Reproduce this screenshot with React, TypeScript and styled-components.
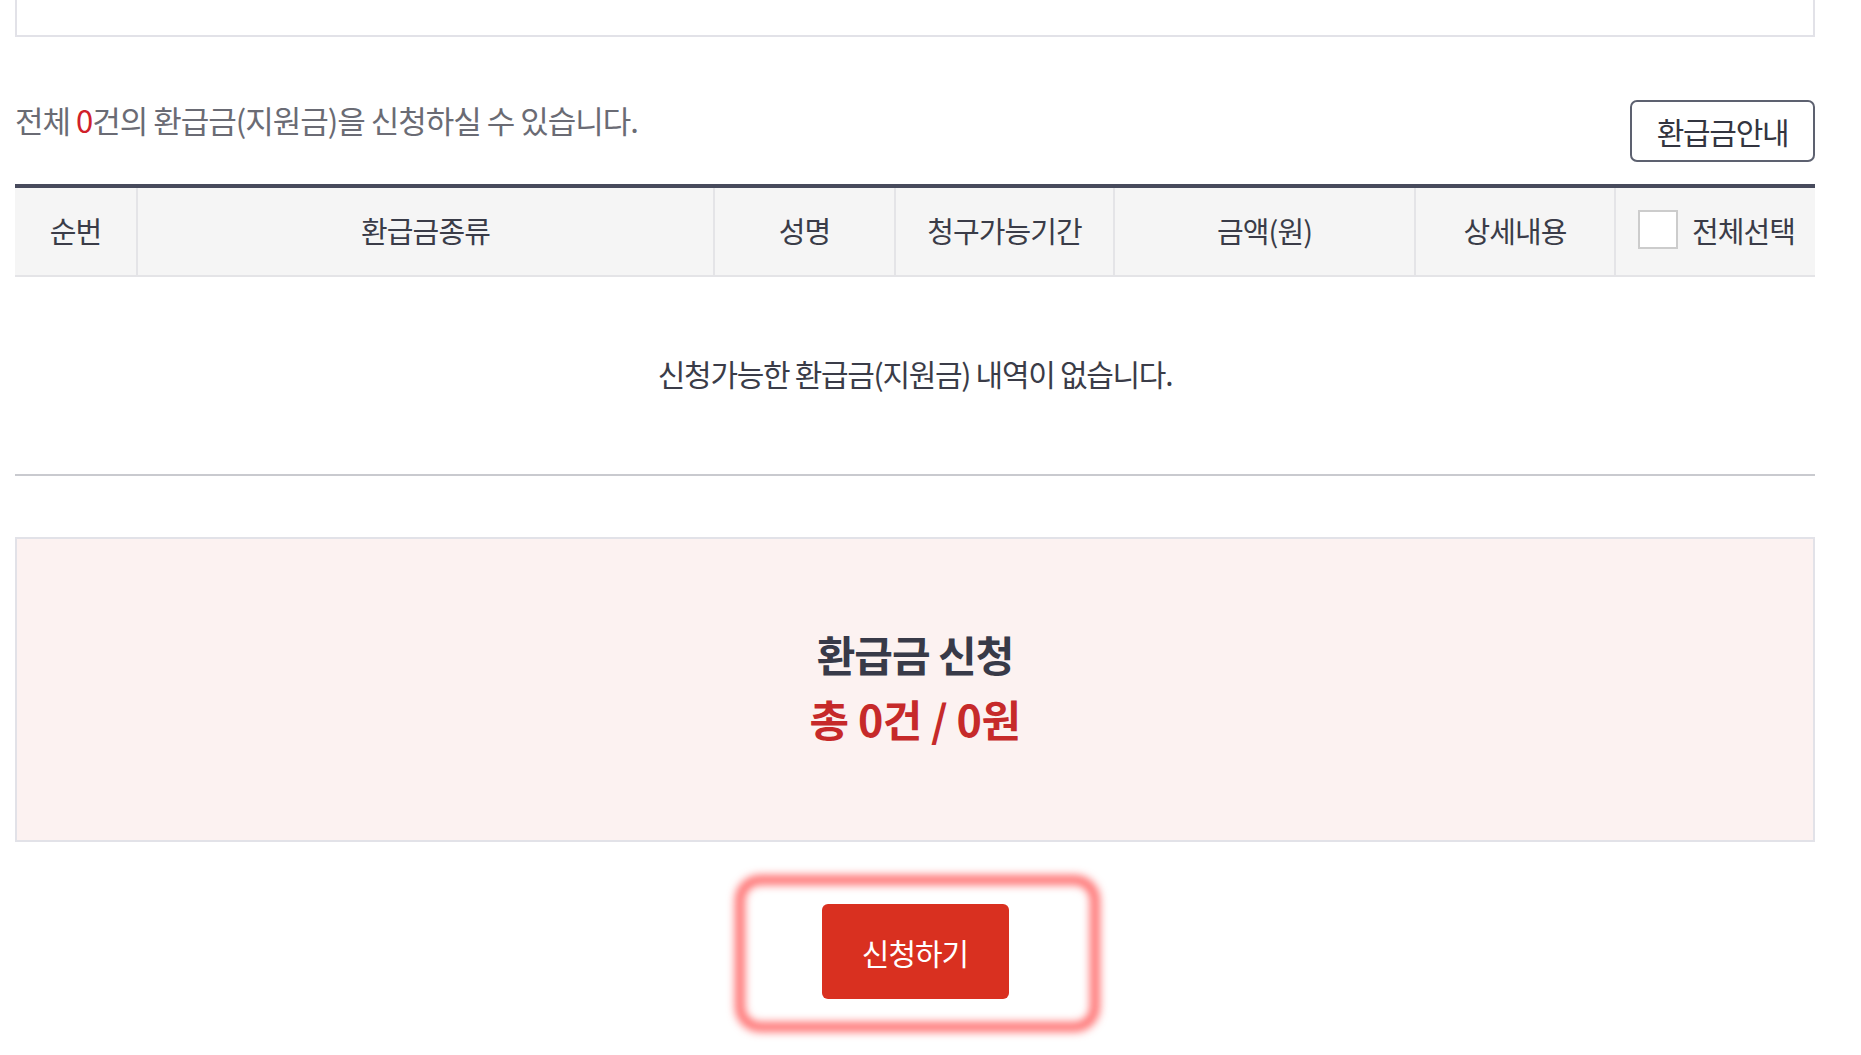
import React from "react";
import styled, { createGlobalStyle } from "styled-components";

const columns = [
  { key: "no", label: "순번" },
  { key: "kind", label: "환급금종류" },
  { key: "name", label: "성명" },
  { key: "period", label: "청구가능기간" },
  { key: "amount", label: "금액(원)" },
  { key: "detail", label: "상세내용" },
];

export default function App() {
  const count = 0;
  const total = 0;

  return (
    <>
      <GlobalStyle />
      <Page>
        <TopBox />

        <IntroRow>
          <IntroText>
            전체 <Red>{count}</Red>건의 환급금(지원금)을 신청하실 수 있습니다.
          </IntroText>
          <GuideButton type="button">환급금안내</GuideButton>
        </IntroRow>

        <Table>
          <HeadRow>
            {columns.map((col) => (
              <HeadCell key={col.key}>{col.label}</HeadCell>
            ))}
            <HeadCell $check>
              <CheckBox />
              전체선택
            </HeadCell>
          </HeadRow>
          <EmptyRow>신청가능한 환급금(지원금) 내역이 없습니다.</EmptyRow>
        </Table>

        <SummaryBox>
          <SummaryTitle>환급금 신청</SummaryTitle>
          <SummaryTotal>
            총 {count}건 / {total}원
          </SummaryTotal>
        </SummaryBox>

        <SubmitArea>
          <SubmitWrap>
            <Glow />
            <SubmitButton type="button">신청하기</SubmitButton>
          </SubmitWrap>
        </SubmitArea>
      </Page>
    </>
  );
}

const GlobalStyle = createGlobalStyle`
  html, body {
    margin: 0;
    padding: 0;
    background: #fff;
  }
  body {
    font-family: "Noto Sans CJK KR", "Noto Sans", sans-serif;
    color: #3a3c48;
  }
`;

const Page = styled.div`
  width: 1800px;
  padding-left: 15px;
  height: 1055px;
  overflow: hidden;
`;

const TopBox = styled.div`
  height: 35px;
  border: 2px solid #e2e2e8;
  border-top: none;
`;

const IntroRow = styled.div`
  display: flex;
  justify-content: space-between;
  align-items: flex-start;
  margin-top: 63px;
`;

const IntroText = styled.p`
  margin: 0;
  font-size: 31px;
  line-height: 40px;
  letter-spacing: -1px;
  color: #6a6b74;
`;

const Red = styled.span`
  color: #d0202a;
`;

const GuideButton = styled.button`
  width: 185px;
  height: 62px;
  border: 2px solid #5d6170;
  border-radius: 7px;
  background: #fff;
  color: #333540;
  font-family: inherit;
  font-size: 30px;
  letter-spacing: -1.3px;
  cursor: pointer;
`;

const Table = styled.div`
  margin-top: 22px;
  border-top: 4px solid #474a5c;
  border-bottom: 2px solid #c9cacf;
`;

const HeadRow = styled.div`
  display: grid;
  grid-template-columns: 121px 577px 181px 219px 301px 200px 1fr;
  height: 87px;
  background: #f5f5f5;
  border-bottom: 2px solid #e4e4e7;
`;

const HeadCell = styled.div<{ $check?: boolean }>`
  display: flex;
  align-items: center;
  justify-content: ${(p) => (p.$check ? "flex-start" : "center")};
  padding-left: ${(p) => (p.$check ? "22px" : "0")};
  padding-bottom: 4px;
  gap: 14px;
  font-size: 29px;
  letter-spacing: -0.9px;
  color: #3a3c48;
  & + & {
    border-left: 2px solid #e4e4e7;
  }
`;

const CheckBox = styled.span`
  width: 36px;
  height: 35px;
  border: 2px solid #cccccc;
  background: #fff;
`;

const EmptyRow = styled.div`
  height: 197px;
  display: flex;
  align-items: center;
  justify-content: center;
  padding-bottom: 6px;
  box-sizing: border-box;
  font-size: 30px;
  letter-spacing: -1.3px;
  color: #3a3c48;
`;

const SummaryBox = styled.div`
  margin-top: 61px;
  height: 305px;
  box-sizing: border-box;
  border: 2px solid #e2e2e8;
  background: #fcf2f1;
  display: flex;
  flex-direction: column;
  align-items: center;
  justify-content: center;
  gap: 4px;
  padding-bottom: 8px;
`;

const SummaryTitle = styled.div`
  font-size: 42px;
  font-weight: 700;
  letter-spacing: -1px;
  color: #383a48;
  line-height: 60px;
`;

const SummaryTotal = styled.div`
  font-size: 43px;
  font-weight: 700;
  letter-spacing: -0.5px;
  color: #c62a2a;
  line-height: 60px;
`;

const SubmitArea = styled.div`
  display: flex;
  justify-content: center;
  margin-top: 62px;
`;

const SubmitWrap = styled.div`
  position: relative;
`;

const Glow = styled.div`
  position: absolute;
  left: -86px;
  right: -90px;
  top: -28px;
  bottom: -32px;
  border: 8px solid rgba(255, 60, 60, 0.9);
  border-radius: 24px;
  filter: blur(5px);
  pointer-events: none;
`;

const SubmitButton = styled.button`
  width: 187px;
  height: 95px;
  border: none;
  border-radius: 6px;
  background: #d93020;
  color: #fff;
  font-family: inherit;
  font-size: 30px;
  letter-spacing: -1px;
  cursor: pointer;
`;
